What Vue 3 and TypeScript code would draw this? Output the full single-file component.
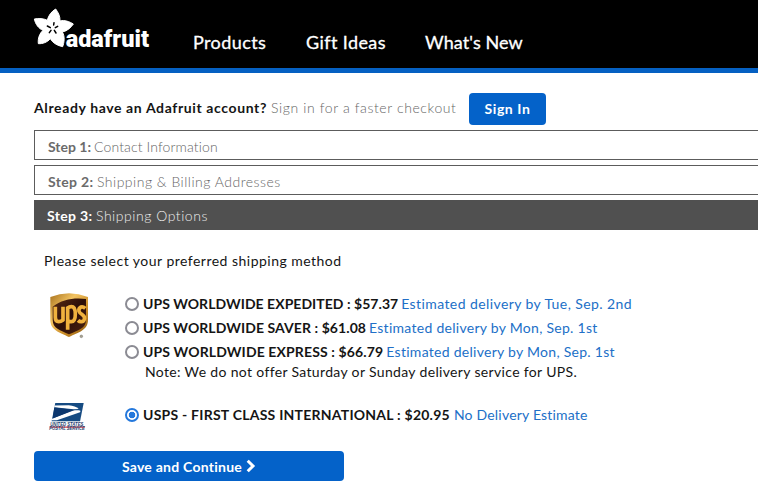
<script setup lang="ts">
import { ref } from 'vue'

interface Rate { id: string; name: string; estimate: string }
interface Carrier { id: string; rates: Rate[]; note?: string }

const nav = [
  { id: 'products', label: 'Products' },
  { id: 'gifts', label: 'Gift Ideas' },
  { id: 'new', label: "What's New" },
]
const steps = [
  { n: 1, label: 'Contact Information' },
  { n: 2, label: 'Shipping & Billing Addresses' },
  { n: 3, label: 'Shipping Options' },
]
const current = 3
const carriers: Carrier[] = [
  {
    id: 'ups',
    rates: [
      { id: 'expedited', name: 'UPS WORLDWIDE EXPEDITED : $57.37', estimate: 'Estimated delivery by Tue, Sep. 2nd' },
      { id: 'saver', name: 'UPS WORLDWIDE SAVER : $61.08', estimate: 'Estimated delivery by Mon, Sep. 1st' },
      { id: 'express', name: 'UPS WORLDWIDE EXPRESS : $66.79', estimate: 'Estimated delivery by Mon, Sep. 1st' },
    ],
    note: 'Note: We do not offer Saturday or Sunday delivery service for UPS.',
  },
  {
    id: 'usps',
    rates: [{ id: 'first', name: 'USPS - FIRST CLASS INTERNATIONAL : $20.95', estimate: 'No Delivery Estimate' }],
  },
]
const selected = ref('first')
</script>

<template>
  <div class="page">
    <header class="header">
      <svg class="logo" viewBox="0 0 348 123" aria-label="adafruit">
        <g fill="#fff">
          <path d="M65 3C72 12 79 25 78 39C91 35 107 41 118 48C110 60 99 69 85 72C94 86 90 105 86 116C71 113 56 105 49 92C40 103 25 108 13 107C11 91 17 76 27 67C14 62 4 48 1 33C14 31 29 31 40 37C43 22 53 10 65 3Z" stroke="#fff" stroke-width="3" stroke-linejoin="round" />
        </g>
        <g stroke="#000" stroke-width="4.5" stroke-linecap="round">
          <path d="M59 51L60 44M64 59L71 55M61 67L66 75M51 67L46 74M49 59L40 54" />
        </g>
        <text x="95" y="117" textLength="250" lengthAdjust="spacingAndGlyphs" fill="#fff" class="wordmark">adafruit</text>
      </svg>
      <nav class="nav">
        <a v-for="item in nav" :key="item.id" :class="item.id">{{ item.label }}</a>
      </nav>
    </header>

    <main class="main">
      <div class="account">
        <p><strong>Already have an Adafruit account?</strong> <span>Sign in for a faster checkout</span></p>
        <button class="signin" type="button">Sign In</button>
      </div>

      <div class="steps">
        <div v-for="s in steps" :key="s.n" class="step" :class="['step' + s.n, { active: s.n === current }]">
          <strong>Step {{ s.n }}:</strong><span>{{ s.label }}</span>
        </div>
      </div>

      <p class="prompt">Please select your preferred shipping method</p>

      <section v-for="c in carriers" :key="c.id" class="carrier" :class="c.id">
        <div class="mark">
          <svg v-if="c.id === 'ups'" class="ups-logo" viewBox="0 0 120 138" aria-label="UPS">
            <defs>
              <linearGradient id="gold" x1="0" y1="0" x2="1" y2="1">
                <stop offset="0" stop-color="#a8721d" /><stop offset=".35" stop-color="#f3c463" />
                <stop offset=".65" stop-color="#c88a25" /><stop offset="1" stop-color="#8d5a13" />
              </linearGradient>
              <linearGradient id="brown" x1="0" y1="0" x2="1" y2="1">
                <stop offset="0" stop-color="#5a2c14" /><stop offset=".5" stop-color="#2c0f08" /><stop offset="1" stop-color="#4a2110" />
              </linearGradient>
            </defs>
            <path d="M1 12Q57-10 114 12V80C114 112 86 117 57 132C28 117 1 112 1 80Z" fill="url(#gold)" />
            <path d="M8 41C36 19 73 13 108 18V80C108 107 84 111 57 124C31 111 8 107 8 80Z" fill="url(#brown)" />
            <g fill="none" stroke="#f0b23e" stroke-width="11">
              <path d="M16 41V73Q16 86 26 86Q33 86 39 81V41" />
              <path d="M53 110V45Q58 41 64 41Q76 41 76 63Q76 86 64 86Q58 86 54 83" />
              <path d="M106 46Q99 40 93 42Q85 46 87 55Q89 60 97 65Q106 71 103 79Q100 87 93 86Q88 86 84 82" />
            </g>
            <circle cx="94" cy="130" r="4" fill="#aaa48e" stroke="#777" stroke-width="1.5" />
          </svg>
          <svg v-else class="usps-logo" viewBox="0 0 112 86" aria-label="United States Postal Service">
            <path d="M19 2H105L94 57H8Z" fill="#164b82" />
            <path d="M17 10L60 9Q80 11 90 20L74 21L16 15Z" fill="#fff" />
            <path d="M72 24H90Q98 24 94 30L24 54H9L9 50Z" fill="#fff" />
            <path d="M16 16L78 23L70 26L11 49Z" fill="#0c376e" />
            <path d="M2 75H109" stroke="#d43c4c" stroke-width="3.5" />
            <text x="4" y="71" textLength="100" lengthAdjust="spacingAndGlyphs" class="postal">UNITED STATES</text>
            <text x="1" y="85" textLength="107" lengthAdjust="spacingAndGlyphs" class="postal">POSTAL SERVICE</text>
          </svg>
        </div>
        <div class="rates">
          <label v-for="r in c.rates" :key="r.id" class="rate" :class="r.id">
            <input v-model="selected" type="radio" name="rate" :value="r.id" />
            <strong>{{ r.name }}</strong><span>{{ r.estimate }}</span>
          </label>
          <p v-if="c.note" class="note">{{ c.note }}</p>
        </div>
      </section>

      <button class="continue" type="button">
        <span>Save and Continue</span>
        <svg viewBox="0 0 10 14"><path d="M1.7 1.7L7 7L1.7 12.3" fill="none" stroke="#fff" stroke-width="3" /></svg>
      </button>
    </main>
  </div>
</template>

<style>
body { background: #fff; }
</style>
<style scoped>
.page { width: 758px; height: 487px; overflow: hidden; background: #fff; color: #151515; font-family: Lato, sans-serif; font-size: 14px; line-height: 20px; letter-spacing: .5px; white-space: nowrap; }
p { margin: 0; }
button { border: 0; padding: 0; color: #fff; background: #0462c9; font: inherit; font-weight: 700; letter-spacing: inherit; }
.header { height: 68px; background: #000; border-bottom: 5px solid #0560c2; display: flex; align-items: flex-start; padding-left: 34px; }
.logo { width: 116px; height: 41px; margin-top: 8px; overflow: visible; }
.wordmark { font: 900 70px Roboto, sans-serif; letter-spacing: 0; }
.nav { display: flex; padding: 30px 0 0 43px; color: #fff; font-size: 18px; line-height: 24px; -webkit-text-stroke: .3px #fff; letter-spacing: .4px; }
.products { width: 113px; }
.gifts { width: 119px; }
.new { letter-spacing: .1px; }
.main { padding: 20px 0 0 34px; }
.account { display: flex; align-items: center; height: 32px; }
.account p { width: 435px; padding-bottom: 2px; }
.account strong { letter-spacing: .62px; }
.account span { color: #666; font-weight: 300; letter-spacing: .61px; }
.signin { width: 77px; height: 32px; border-radius: 4px; padding-bottom: 1px; letter-spacing: .6px; }
.steps { display: grid; gap: 5px; padding-top: 5px; }
.step { box-sizing: border-box; height: 30px; border: 1px solid #5c5c5c; border-right: 0; padding: 6px 0 0 13px; color: #666; line-height: 20px; display: flex; }
.step strong { color: #6b6b6b; width: 49px; letter-spacing: .35px; }
.step span { font-weight: 300; letter-spacing: .54px; }
.step1 strong { width: 46px; letter-spacing: 0; }
.step1 span { letter-spacing: .13px; }
.step2 span { letter-spacing: .5px; }
.step.active { background: #505050; border-color: #505050; color: #eee; padding: 5px 0 0 12px; }
.active strong { color: #fff; }
.prompt { padding: 21px 0 0 10px; letter-spacing: .48px; }
.carrier { display: flex; }
.ups { padding-top: 21px; height: 90px; }
.mark { width: 91px; padding-left: 15px; box-sizing: border-box; flex: none; }
.ups-logo { display: block; width: 40px; height: 46px; margin: 1px 0 0 1px; }
.usps-logo { display: block; width: 37px; height: 29px; overflow: visible; }
.postal { font: italic 700 15px "Liberation Sans", sans-serif; letter-spacing: 0; fill: #26426e; }
.rates { display: flex; flex-direction: column; }
.rate { display: flex; align-items: center; height: 24px; }
.rate strong { margin-right: 3px; letter-spacing: .04px; }
.rate.saver strong { letter-spacing: .07px; }
.rate span { color: #216fc7; letter-spacing: .28px; }
.rate.expedited span { letter-spacing: .41px; }
.rate.express strong { letter-spacing: .13px; }
.rate.first strong { letter-spacing: .24px; margin-right: 4px; }
.rate.first span { letter-spacing: .2px; }
.rate input { appearance: none; box-sizing: border-box; width: 14px; height: 14px; border: 2px solid #8b8b93; border-radius: 50%; margin: 0 4px 0 0; background: #fff; }
.rate input:checked { border-color: #2478dc; background: radial-gradient(circle, #2478dc 0 3px, #fff 3.6px); }
.note { padding-left: 20px; margin-top: -2px; letter-spacing: .34px; }
.usps { padding-top: 20px; }
.usps .rates { padding-top: 1px; }
.continue { display: flex; align-items: center; justify-content: center; width: 310px; height: 30px; border-radius: 4px; margin-top: 20px; gap: 4px; padding-top: 2px; letter-spacing: .25px; }
.continue svg { width: 10px; height: 14px; margin-top: -2px; }
</style>
